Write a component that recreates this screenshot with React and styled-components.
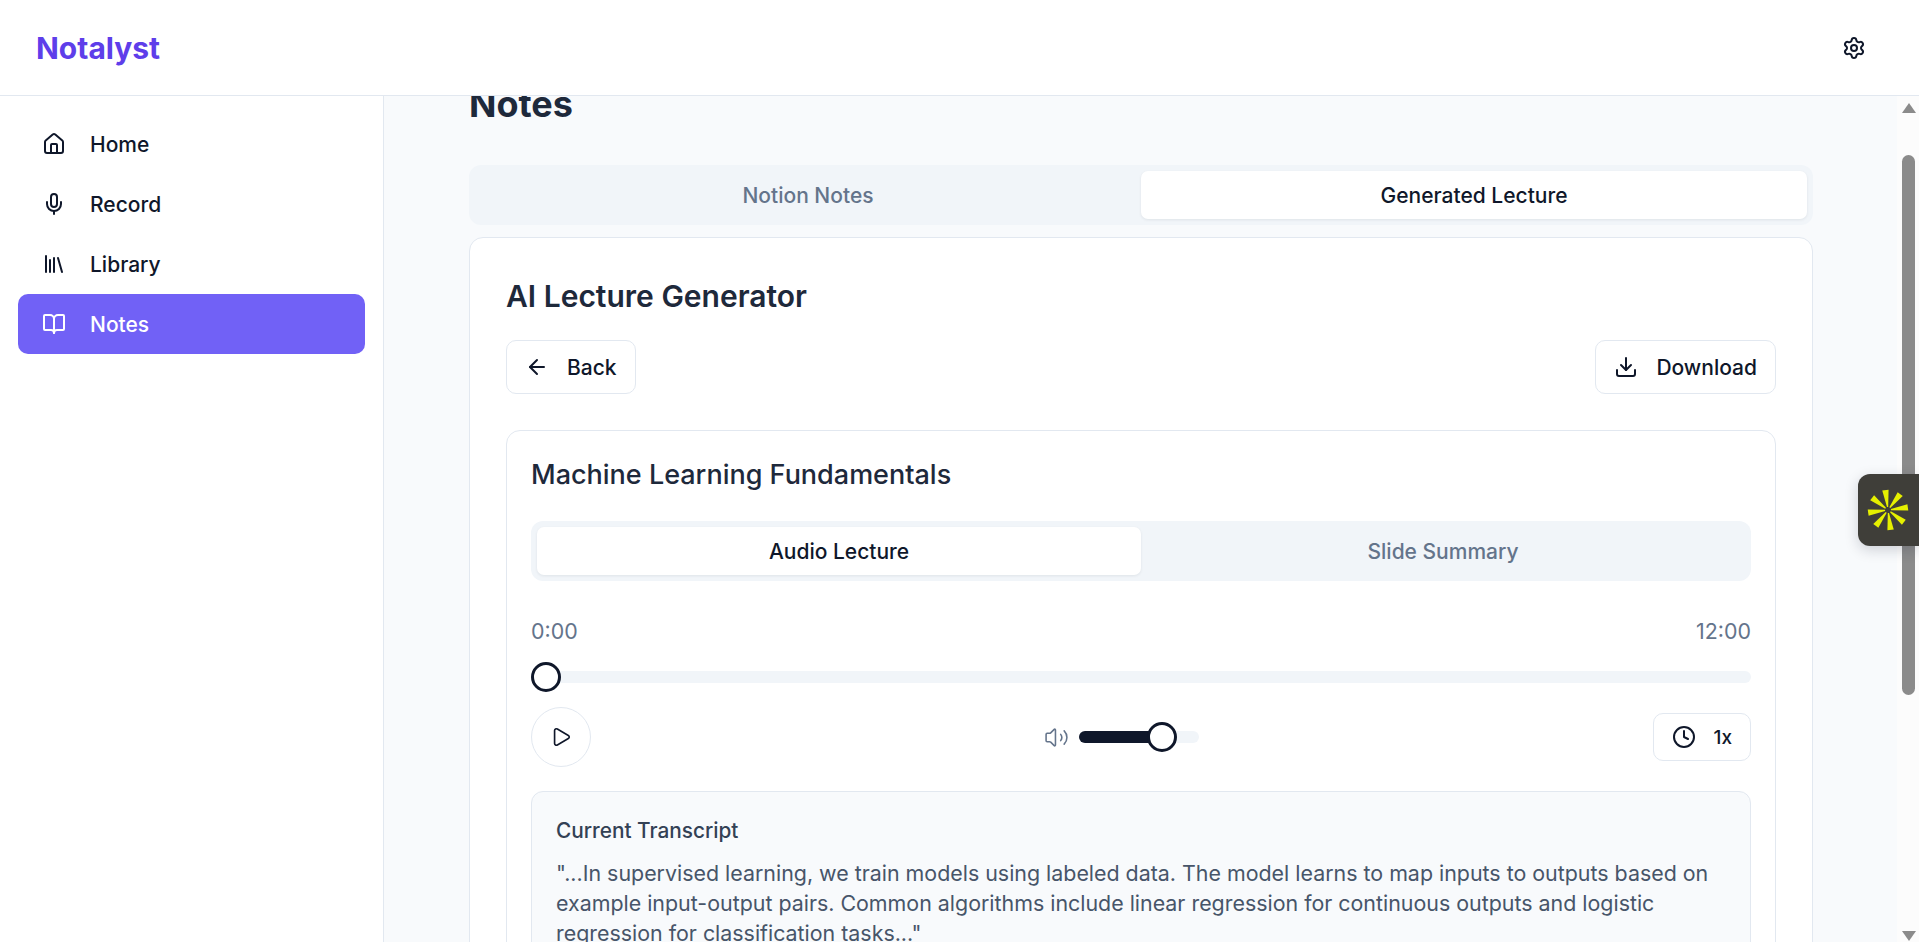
import React, { useLayoutEffect, useRef } from "react";
import styled, { createGlobalStyle } from "styled-components";
import {
  ArrowLeft,
  BookOpen,
  Clock,
  Download,
  House,
  Library,
  Mic,
  Play,
  Settings,
  Volume2,
} from "lucide-react";

const GlobalStyle = createGlobalStyle`
  * {
    box-sizing: border-box;
  }
  html, body {
    margin: 0;
    height: 100%;
    overflow: hidden;
    background: #fff;
    font-family: Inter, "Liberation Sans", sans-serif;
    color: #0f172a;
  }
`;

const Shell = styled.div`
  height: 100vh;
  display: flex;
  flex-direction: column;
`;

const Header = styled.header`
  flex: 0 0 96px;
  display: flex;
  align-items: center;
  justify-content: space-between;
  padding: 0 53px 0 36px;
  background: #fff;
  border-bottom: 1px solid #e2e8f0;
`;

const Logo = styled.div`
  font-size: 30px;
  font-weight: 700;
  color: #5e3eea;
`;

const IconButton = styled.button`
  display: flex;
  padding: 0;
  border: 0;
  background: none;
  color: #0f172a;
`;

const Body = styled.div`
  flex: 1;
  min-height: 0;
  display: flex;
`;

const Sidebar = styled.nav`
  flex: 0 0 384px;
  display: flex;
  flex-direction: column;
  padding: 18px 18px 0;
  background: #fff;
  border-right: 1px solid #e2e8f0;
`;

const NavItem = styled.a`
  height: 60px;
  display: flex;
  align-items: center;
  gap: 24px;
  padding: 0 24px;
  border-radius: 10px;
  font-size: 21px;
  font-weight: 500;
  color: ${(p) => (p.$active ? "#fff" : "#0f172a")};
  background: ${(p) => (p.$active ? "#7161f6" : "transparent")};
`;

const Main = styled.main`
  flex: 1;
  min-width: 0;
  overflow: hidden;
  background: #f8fafc;
`;

const ScrollRail = styled.div`
  flex: 0 0 22px;
  display: flex;
  flex-direction: column;
  align-items: center;
  padding: 7px 0 1px 1px;
  background: #fcfcfc;
`;

const ScrollArrow = styled.span`
  width: 0;
  height: 0;
  border-left: 7.5px solid transparent;
  border-right: 7.5px solid transparent;
  ${(p) =>
    p.$down
      ? "margin-top: auto; border-top: 10px solid #8b8b8b;"
      : "border-bottom: 10px solid #8b8b8b;"}
`;

const ScrollThumb = styled.div`
  width: 13px;
  height: 540px;
  margin-top: 42px;
  border-radius: 7px;
  background: #8b8b8b;
`;

const Page = styled.div`
  padding: 44px 84px 60px 85px;
`;

const PageTitle = styled.h1`
  margin: 0 0 38px;
  font-size: 36px;
  line-height: 45px;
  font-weight: 700;
  color: #1e293b;
`;

const TabList = styled.div`
  display: flex;
  height: 60px;
  padding: 6px;
  border-radius: 12px;
  background: #f1f5f9;
`;

const Tab = styled.button`
  flex: 1;
  border: 0;
  border-radius: 7px;
  font-family: inherit;
  font-size: 21px;
  font-weight: 500;
  color: ${(p) => (p.$active ? "#0f172a" : "#64748b")};
  background: ${(p) => (p.$active ? "#fff" : "transparent")};
  box-shadow: ${(p) => (p.$active ? "0 1px 3px rgba(15,23,42,.08)" : "none")};
`;

const Card = styled.section`
  margin-top: 12px;
  padding: 40px 36px 36px;
  background: #fff;
  border: 1px solid #e2e8f0;
  border-radius: 14px;
`;

const CardTitle = styled.h2`
  margin: 0 0 26px;
  font-size: 30px;
  line-height: 36px;
  font-weight: 600;
  color: #1e293b;
`;

const ActionRow = styled.div`
  display: flex;
  justify-content: space-between;
  margin-bottom: 36px;
`;

const OutlineButton = styled.button`
  height: ${(p) => p.$height || 54}px;
  display: flex;
  align-items: center;
  gap: 18px;
  padding: 0 18px;
  background: #fff;
  border: 1px solid #e2e8f0;
  border-radius: 10px;
  font-family: inherit;
  font-size: ${(p) => p.$size || 21}px;
  font-weight: 500;
  color: #0f172a;
`;

const LectureCard = styled.article`
  padding: 23px 24px 40px;
  border: 1px solid #e2e8f0;
  border-radius: 14px;
`;

const LectureTitle = styled.h3`
  margin: 0 0 25px;
  font-size: 27px;
  line-height: 42px;
  font-weight: 500;
  color: #1e293b;
`;

const TimeRow = styled.div`
  display: flex;
  justify-content: space-between;
  margin-top: 36px;
  font-size: 21.4px;
  line-height: 28px;
  color: #64748b;
`;

const SeekBar = styled.div`
  position: relative;
  height: 12px;
  margin-top: 26px;
  border-radius: 6px;
  background: #f1f5f9;
`;

const Thumb = styled.span`
  position: absolute;
  top: -9px;
  width: 30px;
  height: 30px;
  border: 3.5px solid #0f172a;
  border-radius: 50%;
  background: #fff;
`;

const Controls = styled.div`
  display: flex;
  align-items: center;
  justify-content: space-between;
  margin-top: 24px;
`;

const PlayButton = styled.button`
  width: 60px;
  height: 60px;
  display: flex;
  align-items: center;
  justify-content: center;
  padding: 0;
  background: #fff;
  border: 1px solid #e2e8f0;
  border-radius: 50%;
  color: #0f172a;
`;

const VolumeGroup = styled.div`
  display: flex;
  align-items: center;
  gap: 10px;
  color: #64748b;
`;

const VolumeBar = styled.div`
  position: relative;
  width: 120px;
  height: 12px;
  border-radius: 6px;
  background: #f1f5f9;
`;

const VolumeFill = styled.div`
  height: 100%;
  border-radius: 6px;
  background: #0f172a;
`;

const Transcript = styled.div`
  margin-top: 24px;
  padding: 24px;
  background: #f8fafc;
  border: 1px solid #e2e8f0;
  border-radius: 12px;
`;

const TranscriptTitle = styled.div`
  margin-bottom: 12px;
  font-size: 20.8px;
  line-height: 30px;
  font-weight: 500;
  color: #334155;
`;

const TranscriptText = styled.p`
  margin: 0;
  font-size: 21.4px;
  line-height: 30px;
  color: #475569;
`;

const FloatingWidget = styled.div`
  position: fixed;
  top: 474px;
  right: 0;
  width: 61px;
  height: 72px;
  display: flex;
  align-items: center;
  padding-left: 8px;
  background: #3f3e39;
  border-radius: 12px 0 0 12px;
  box-shadow: 0 4px 14px rgba(15, 23, 42, 0.18);
`;

function Spark() {
  const wedges = [0, 45, 90, 135, 180, 225, 270, 315];
  return (
    <svg width="44" height="44" viewBox="-22 -22 44 44" fill="#e6f000">
      {wedges.map((a) => (
        <polygon key={a} points="-0.6,-3 0.6,-3 3.4,-20 -3,-20" transform={`rotate(${a - 8})`} />
      ))}
    </svg>
  );
}

const navItems = [
  { label: "Home", Icon: House },
  { label: "Record", Icon: Mic },
  { label: "Library", Icon: Library },
  { label: "Notes", Icon: BookOpen, active: true },
];

export default function App() {
  const mainRef = useRef(null);

  // the reference is photographed a little way down the page
  useLayoutEffect(() => {
    mainRef.current.scrollTop = 58;
  }, []);

  return (
    <Shell>
      <GlobalStyle />
      <Header>
        <Logo>Notalyst</Logo>
        <IconButton>
          <Settings size={24} />
        </IconButton>
      </Header>
      <Body>
        <Sidebar>
          {navItems.map(({ label, Icon, active }) => (
            <NavItem key={label} $active={active}>
              <Icon size={24} strokeWidth={2} />
              {label}
            </NavItem>
          ))}
        </Sidebar>
        <Main ref={mainRef}>
          <Page>
            <PageTitle>Notes</PageTitle>
            <TabList>
              <Tab>Notion Notes</Tab>
              <Tab $active>Generated Lecture</Tab>
            </TabList>
            <Card>
              <CardTitle>AI Lecture Generator</CardTitle>
              <ActionRow>
                <OutlineButton>
                  <ArrowLeft size={24} />
                  Back
                </OutlineButton>
                <OutlineButton>
                  <Download size={24} />
                  Download
                </OutlineButton>
              </ActionRow>
              <LectureCard>
                <LectureTitle>Machine Learning Fundamentals</LectureTitle>
                <TabList>
                  <Tab $active>Audio Lecture</Tab>
                  <Tab>Slide Summary</Tab>
                </TabList>
                <TimeRow>
                  <span>0:00</span>
                  <span>12:00</span>
                </TimeRow>
                <SeekBar>
                  <Thumb />
                </SeekBar>
                <Controls>
                  <PlayButton>
                    <Play size={22} strokeWidth={1.8} />
                  </PlayButton>
                  <VolumeGroup>
                    <Volume2 size={25} strokeWidth={1.5} />
                    <VolumeBar>
                      <VolumeFill style={{ width: "70%" }} />
                      <Thumb style={{ left: 68 }} />
                    </VolumeBar>
                  </VolumeGroup>
                  <OutlineButton $height={48} $size={19}>
                    <Clock size={24} />
                    1x
                  </OutlineButton>
                </Controls>
                <Transcript>
                  <TranscriptTitle>Current Transcript</TranscriptTitle>
                  <TranscriptText>
                    "...In supervised learning, we train models using labeled data. The model learns to map inputs to outputs based on example input-output pairs. Common algorithms include linear regression for continuous outputs and logistic regression for classification tasks..."
                  </TranscriptText>
                </Transcript>
              </LectureCard>
            </Card>
          </Page>
        </Main>
        <ScrollRail>
          <ScrollArrow />
          <ScrollThumb />
          <ScrollArrow $down />
        </ScrollRail>
      </Body>
      <FloatingWidget>
        <Spark />
      </FloatingWidget>
    </Shell>
  );
}
